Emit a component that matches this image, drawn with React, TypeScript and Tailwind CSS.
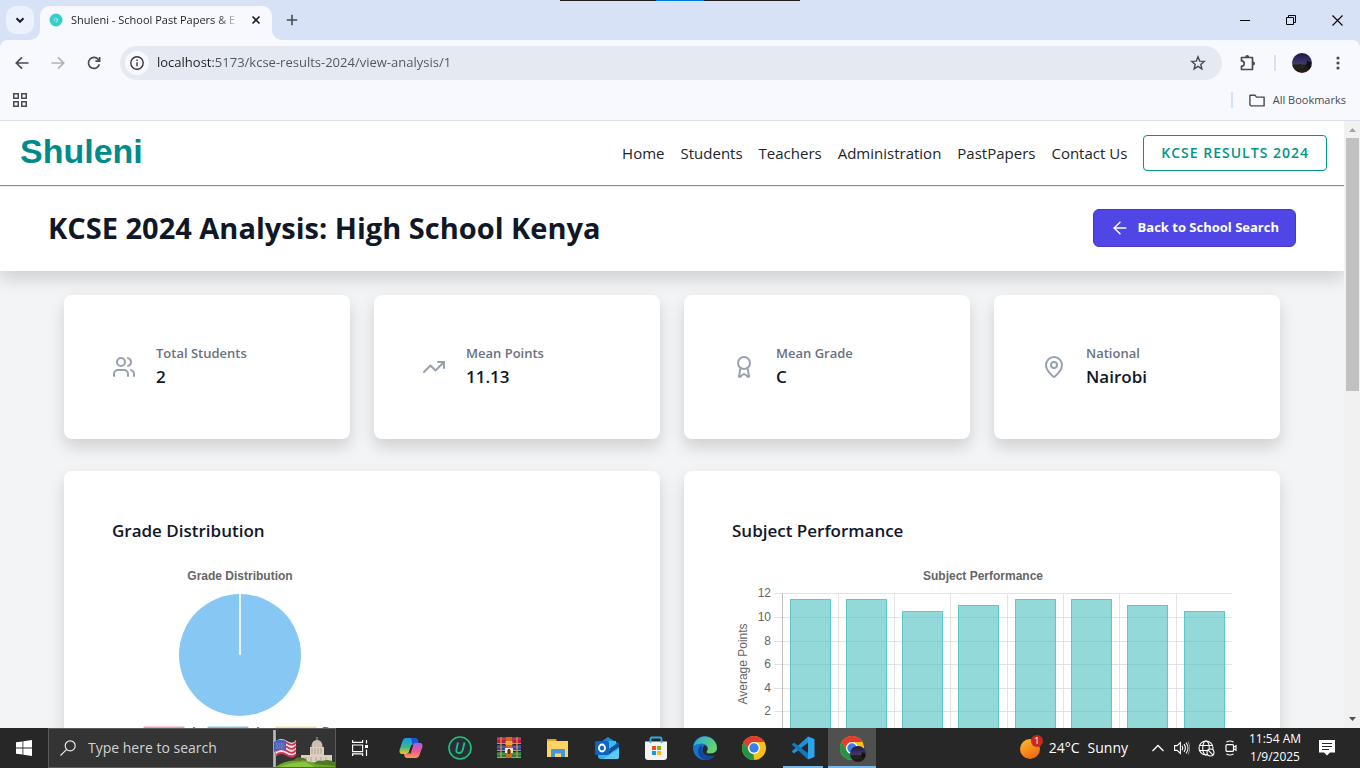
import { useState } from 'react';
import type { ReactNode } from 'react';
import { ArrowLeft, Award, MapPin, TrendingUp, Users } from 'lucide-react';

const gradeLegend = [
  { label: 'A', x: 32, fill: '#ffb1c1', stroke: '#ff6384' },
  { label: 'A-', x: 96, fill: '#9ad0f5', stroke: '#36a2eb' },
  { label: 'B+', x: 164, fill: '#ffe6aa', stroke: '#ffce56' },
];

const subjectPoints = [11.5, 11.5, 10.5, 11, 11.5, 11.5, 11, 10.5];

const navLinks = ['Home', 'Students', 'Teachers', 'Administration', 'PastPapers', 'Contact Us'];

/* ---------- Browser chrome ---------- */

const TabStrip = () => (
  <div className="relative flex h-10 items-end">
    <div className="absolute left-1/2 top-0 flex h-px w-60 -translate-x-1/2 bg-[#1f1f1f]">
      <span className="ml-24 w-12 bg-[#0078d7]" />
    </div>
    <button aria-label="Search tabs" className="mb-1.5 ml-1.5 flex size-7 items-center justify-center rounded-[10px] bg-[#ebf1fd]">
      <svg viewBox="0 0 10 10" className="size-2.5" fill="none" stroke="#1f1f1f" strokeWidth="2">
        <path d="M1.5 3.2 5 6.8 8.5 3.2" />
      </svg>
    </button>
    <div className="relative ml-1.5 flex h-[34px] w-58 items-center rounded-t-[10px] bg-[#f8f9fe] pb-1.5 pl-[9px] pr-2">
      {/* flared bottom corners of the active tab */}
      <svg viewBox="0 0 10 10" className="absolute -left-2.5 bottom-0 size-2.5" fill="#f8f9fe">
        <path d="M10 0v10H0A10 10 0 0 0 10 0z" />
      </svg>
      <svg viewBox="0 0 10 10" className="absolute -right-2.5 bottom-0 size-2.5" fill="#f8f9fe">
        <path d="M0 0v10h10A10 10 0 0 1 0 0z" />
      </svg>
      <svg viewBox="0 0 14 14" className="size-3.5 shrink-0">
        <circle cx="7" cy="7" r="6.5" fill="#34cfc9" />
        <path d="M4.5 6 7 4.6l2.6 2L8.4 9 7 9.4 5.4 8z" fill="#a4efeb" />
        <path d="M5 6.2 8.6 8M7 5.2 6.4 9" stroke="#34bdb8" strokeWidth=".7" />
      </svg>
      <span className="ml-2 whitespace-nowrap text-[11px] text-[#1f1f1f] [mask-image:linear-gradient(90deg,#000_145px,transparent_170px)]">
        Shuleni - School Past Papers &amp; E
      </span>
      <button aria-label="Close tab" className="ml-auto flex size-4 items-center justify-center">
        <svg viewBox="0 0 10 10" className="size-2.5" stroke="#1f1f1f" strokeWidth="1.6">
          <path d="m1.5 1.5 7 7M8.5 1.5l-7 7" />
        </svg>
      </button>
    </div>
    <button aria-label="New tab" className="mb-1.5 ml-1.5 flex size-7 items-center justify-center">
      <svg viewBox="0 0 12 12" className="size-3" stroke="#474b52" strokeWidth="1.6">
        <path d="M6 .8v10.4M.8 6h10.4" />
      </svg>
    </button>
    <div className="ml-auto flex h-full text-black">
      <button aria-label="Minimize" className="flex w-[46px] items-center justify-center">
        <svg viewBox="0 0 10 10" className="size-2.5" stroke="currentColor">
          <path d="M0 5.5h10" />
        </svg>
      </button>
      <button aria-label="Restore" className="flex w-[46px] items-center justify-center">
        <svg viewBox="0 0 10 10" className="size-2.5" fill="none" stroke="currentColor">
          <path d="M.5 2.5h7v7h-7zM2.5 2.5v-2h7v7h-2" />
        </svg>
      </button>
      <button aria-label="Close" className="flex w-[46px] items-center justify-center">
        <svg viewBox="0 0 11 11" className="size-[11px]" stroke="currentColor" strokeWidth="1.1">
          <path d="m.5.5 10 10M10.5.5l-10 10" />
        </svg>
      </button>
    </div>
  </div>
);

const ProfilePicture = () => (
  <svg viewBox="0 0 20 20" className="size-5">
    <defs>
      <linearGradient id="night" x1="0" y1="0" x2="0" y2="1">
        <stop offset="0" stopColor="#1c1946" />
        <stop offset=".55" stopColor="#433a6c" />
        <stop offset=".62" stopColor="#1a1a16" />
        <stop offset="1" stopColor="#2b1b12" />
      </linearGradient>
    </defs>
    <circle cx="10" cy="10" r="10" fill="url(#night)" />
    <path d="m14 12 1.500-5 1.500 2 2-1a10 10 0 0 1-2 8z" fill="#101116" />
    <path d="M1 12.500 8 11l6 2-4 3H3z" fill="#24251a" />
  </svg>
);

const Toolbar = () => {
  const [url, setUrl] = useState('localhost:5173/kcse-results-2024/view-analysis/1');

  return (
    <div className="flex items-center rounded-t-lg bg-[#f8f9fe] px-1 pb-[3px] pt-[5px] text-[#474b57]">
      <button aria-label="Back" className="flex size-9 items-center justify-center">
        <svg viewBox="0 0 14 14" className="size-3.5" fill="none" stroke="currentColor" strokeWidth="1.7">
          <path d="M13.500 7H1.500M7 1.300 1.300 7 7 12.700" />
        </svg>
      </button>
      <button aria-label="Forward" className="flex size-9 items-center justify-center text-[#b1b3b8]">
        <svg viewBox="0 0 14 14" className="size-3.5" fill="none" stroke="currentColor" strokeWidth="1.7">
          <path d="M.5 7h12M7 1.300 12.700 7 7 12.700" />
        </svg>
      </button>
      <button aria-label="Reload" className="flex size-9 items-center justify-center">
        <svg viewBox="0 0 14 14" className="size-3.5" fill="none" stroke="currentColor" strokeWidth="1.7">
          <path d="M12.300 8.200A5.500 5.500 0 1 1 11.500 3.800L12.500 5" />
          <path d="M12.600 1v4.200H8.400" />
        </svg>
      </button>
      <div className="ml-2 flex h-[34px] flex-1 items-center rounded-full bg-[#e5e9f2] pl-[5px] pr-4">
        <button aria-label="View site information" className="flex size-6 items-center justify-center rounded-full bg-[#f8f9fe]">
          <svg viewBox="0 0 14 14" className="size-3.5" fill="none" stroke="#33363b" strokeWidth="1.4">
            <circle cx="7" cy="7" r="6.200" />
            <path d="M7 6.200v4M7 3.600v1.500" />
          </svg>
        </button>
        <input
          aria-label="Address"
          value={url}
          onChange={(e) => setUrl(e.target.value)}
          className="ml-2 flex-1 bg-linear-to-r from-[#1f1f1f] from-[56px] to-[#50545c] to-[56px] bg-clip-text text-[13px] text-transparent outline-none"
        />
        <button aria-label="Bookmark this tab">
          <svg viewBox="0 0 16 16" className="size-4" fill="none" stroke="#474b52" strokeWidth="1.4">
            <path d="m8 1.800 1.700 4.300 4.600.3-3.500 3 1.100 4.500L8 11.400l-3.900 2.500 1.100-4.500-3.500-3 4.600-.3z" />
          </svg>
        </button>
      </div>
      <button aria-label="Extensions" className="ml-2 flex size-9 items-center justify-center">
        <svg viewBox="0 0 18 18" className="size-[18px]">
          <path d="M2.500 3.500h11v12h-11v-3.300a2.700 2.700 0 0 0 0-5.400z" fill="none" stroke="currentColor" strokeWidth="1.700" strokeLinejoin="round" />
          <path d="M6.200 3a2 2 0 0 1 4 0zM14 7.500a2 2 0 0 1 0 4z" fill="currentColor" />
        </svg>
      </button>
      <span className="ml-2 h-4 w-0.5 bg-[#d3e2fc]" />
      <button aria-label="Profile" className="ml-2 flex size-9 items-center justify-center">
        <ProfilePicture />
      </button>
      <button aria-label="Menu" className="flex size-9 items-center justify-center">
        <svg viewBox="0 0 4 14" className="h-3.5 w-1" fill="currentColor">
          <circle cx="2" cy="2" r="1.600" />
          <circle cx="2" cy="7" r="1.600" />
          <circle cx="2" cy="12" r="1.600" />
        </svg>
      </button>
    </div>
  );
};

const BookmarksBar = () => (
  <div className="flex h-[37px] items-center border-b border-[#dbe0ea] bg-[#f8f9fe] pb-1 pl-3 pr-3.5 text-[#474b52]">
    <button aria-label="Apps">
      <svg viewBox="0 0 14 14" className="ml-px size-3.5" fill="none" stroke="currentColor" strokeWidth="1.500">
        <path d="M.75.75h4.500v4.500H.75zM8.750.75h4.500v4.500h-4.500zM.75 8.750h4.500v4.500H.75zM8.750 8.750h4.500v4.500h-4.500z" />
      </svg>
    </button>
    <span className="ml-auto h-4 w-0.5 bg-[#d3e2fc]" />
    <button className="ml-4 flex items-center gap-2 text-[11px]">
      <svg viewBox="0 0 16 13" className="h-[13px] w-4" fill="none" stroke="currentColor" strokeWidth="1.400">
        <path d="M.9 10.800V1.300H6l1.500 1.800h7.600v8.800H1.900z" strokeLinejoin="round" />
      </svg>
      All Bookmarks
    </button>
  </div>
);

const ScrollBar = () => (
  <div className="flex w-4 shrink-0 flex-col items-center bg-[#f1f1f1]">
    <svg viewBox="0 0 17 17" className="size-[17px]">
      <path d="M5 11h7L8.500 7z" fill="#a3a3a3" />
    </svg>
    <span className="h-[253px] w-[13px] bg-[#c1c1c1]" />
    <svg viewBox="0 0 17 17" className="mt-auto size-[17px]">
      <path d="M5 6h7l-3.500 4z" fill="#505050" />
    </svg>
  </div>
);

/* ---------- Page ---------- */

const SiteHeader = () => (
  <header className="relative z-10 flex h-16 items-center justify-between bg-white pl-5 pr-[17px] shadow-[0_1px_1px_#8c8c8c]">
    <a href="#" className="pb-1 font-['Liberation_Sans',sans-serif] text-[34px] font-bold leading-10 text-[#008b8b]">
      Shuleni
    </a>
    <nav className="flex items-center gap-4 text-[15px] text-[#212529]">
      {navLinks.map((link) => (
        <a key={link} href="#">
          {link}
        </a>
      ))}
      <a href="#" className="flex h-9 items-center rounded border border-[#009688] px-[17px] text-sm font-semibold tracking-[1px] text-[#009688]">
        KCSE RESULTS 2024
      </a>
    </nav>
  </header>
);

const TitleBar = () => (
  <div className="relative flex items-center justify-between bg-white px-12 py-6 shadow-[0_8px_16px_rgba(0,0,0,0.15)]">
    <h1 className="text-[29px] font-bold leading-[38px] text-gray-900">KCSE 2024 Analysis: High School Kenya</h1>
    <button className="flex h-[38px] items-center rounded-md border border-[#4338ca] bg-[#4f46e5] px-4 text-[13px] font-bold text-white">
      <ArrowLeft className="mr-2 size-5" strokeWidth={1.75} />
      Back to School Search
    </button>
  </div>
);

interface StatCardProps {
  icon: ReactNode;
  label: string;
  value: string;
}

const StatCard = ({ icon, label, value }: StatCardProps) => (
  <div className="flex items-center rounded-lg bg-white p-12 text-gray-400 shadow-[0_8px_16px_rgba(0,0,0,0.15)]">
    {icon}
    <dl className="ml-5">
      <dt className="text-[13px] font-semibold leading-5 text-gray-500">{label}</dt>
      <dd className="text-[17px] font-semibold leading-7 text-gray-900">{value}</dd>
    </dl>
  </div>
);

const ChartCard = ({ title, children }: { title: string; children: ReactNode }) => (
  <section className="rounded-lg bg-white p-12 shadow-[0_8px_16px_rgba(0,0,0,0.15)]">
    <h2 className="mb-4 text-[17px] font-semibold leading-6 text-gray-900">{title}</h2>
    {children}
  </section>
);

const GradeChart = () => (
  <svg viewBox="0 0 256 256" className="size-64 font-['Liberation_Sans',sans-serif] text-xs" fill="#666">
    <text x="128" y="21" textAnchor="middle" fontWeight="bold">
      Grade Distribution
    </text>
    <circle cx="128" cy="96" r="61" fill="#86c7f3" />
    <path d="M128 96V35" stroke="#e9f4fd" strokeWidth="2" />
    {gradeLegend.map((item) => (
      <g key={item.label}>
        <rect x={item.x} y="168" width="40" height="12" fill={item.fill} stroke={item.stroke} strokeWidth=".6" />
        <text x={item.x + 46} y="177">
          {item.label}
        </text>
      </g>
    ))}
  </svg>
);

const SubjectChart = () => {
  const left = 50;
  const step = 56.3;
  const base = 176;
  const unit = 11.8;

  return (
    <svg viewBox="0 0 500 250" className="w-full font-['Liberation_Sans',sans-serif] text-xs" fill="#666">
      <text x="251" y="21" textAnchor="middle" fontWeight="bold">
        Subject Performance
      </text>
      <text x="0" y="0" textAnchor="middle" transform="translate(15 105) rotate(-90)">
        Average Points
      </text>
      <g shapeRendering="crispEdges">
        {[0, 2, 4, 6, 8, 10, 12].map((tick) => (
          <rect key={tick} x="42" y={Math.round(base - tick * unit)} width="458" height="1" fill="#e3e3e3" />
        ))}
        {[0, 1, 2, 3, 4, 5, 6, 7].map((i) => (
          <rect key={i} x={Math.floor(left + i * step)} y="34" width="1" height="150" fill={i === 0 ? '#bfbfbf' : '#e3e3e3'} />
        ))}
      </g>
      {[0, 2, 4, 6, 8, 10, 12].map((tick) => (
        <text key={tick} x="39" y={base - tick * unit + 4} textAnchor="end">
          {tick}
        </text>
      ))}
      {subjectPoints.map((points, i) => {
        const x = Math.floor(left + i * step + 8);
        const y = Math.round(base - points * unit);
        return (
          <g key={i}>
            <rect x={x} y={y} width="41" height={base - y} fill="rgba(75,192,192,0.6)" />
            <path d={`M${x + 0.5} ${base}V${y + 0.5}H${x + 40.5}V${base}`} fill="none" stroke="#4bc0c0" strokeOpacity=".75" />
          </g>
        );
      })}
    </svg>
  );
};

/* ---------- Taskbar ---------- */

const SearchArt = () => (
  <svg viewBox="0 0 62 38" className="h-[38px] w-[62px] shrink-0">
    <path d="M1.500 1v37" stroke="#b9bcc0" strokeWidth="2.600" />
    <path d="M3 12q5-4 11 0t9-1v14q-4 3-10 0t-10 2z" fill="#e9e4ea" />
    <path d="M3 14q5-4 11 0t9-1M3 18q5-4 11 0t9-1M3 22q5-4 11 0t9-1M3 26q5-4 11 0t9-1" stroke="#cf3450" strokeWidth="1.800" fill="none" />
    <path d="M1 13q5-4 12-1v10q-6-3-12 1z" fill="#4d62b4" />
    <path d="M3 15h8M4 17h8M3 19h8" stroke="#9fadde" strokeDasharray="1 1.500" />
    <path d="M44 8v6" stroke="#4a9a88" strokeWidth="1.600" />
    <path d="M38.500 18q0-7 5.500-7t5.500 7z" fill="#cdbfb0" />
    <path d="M37 18h14v8H37zM28 26h31v8H28z" fill="#dccfc1" />
    <path d="M39 19v6M42 19v6M45 19v6M48 19v6M33 28v4M38 28v4M43 28v4M48 28v4M53 28v4" stroke="#ab9b8a" strokeWidth=".900" />
    <path d="M2 38q14-9 30-6t30 1v5z" fill="#6fa52f" />
    <path d="M6 38q14-5 26-5l10 5z" fill="#8cc63c" />
    <path d="M21 31q3-4 7-2 4-1 6 3zM41 35q3-5 8-3 8-3 13 2v3z" fill="#4f7a1f" />
  </svg>
);

const ChromeLogo = ({ className }: { className: string }) => (
  <svg viewBox="0 0 24 24" className={className}>
    <circle cx="12" cy="12" r="12" fill="#fbc116" />
    <path d="M1.600 6A12 12 0 0 1 22.400 6H12a6 6 0 0 0-5.200 9z" fill="#e33b2e" />
    <path d="M1.600 6 6.800 15A6 6 0 0 0 12 18l2.500-.500L12 24A12 12 0 0 1 1.600 6z" fill="#229447" />
    <path d="M17.200 15 12 24l-.5-5.900z" fill="#fbc116" />
    <circle cx="12" cy="12" r="5.900" fill="#fff" />
    <circle cx="12" cy="12" r="4.700" fill="#3b7ded" />
  </svg>
);

const taskIcons: { name: string; icon: ReactNode; open?: boolean; active?: boolean }[] = [
  {
    name: 'Copilot',
    icon: (
      <svg viewBox="0 0 24 24" className="size-6">
        <defs>
          <linearGradient id="cpA" x1="0" y1="0" x2="0" y2="1">
            <stop offset="0" stopColor="#1598ef" />
            <stop offset=".55" stopColor="#37b98a" />
            <stop offset="1" stopColor="#f3c51c" />
          </linearGradient>
          <linearGradient id="cpB" x1="0" y1="0" x2="0" y2="1">
            <stop offset="0" stopColor="#a95cf0" />
            <stop offset=".55" stopColor="#f05a90" />
            <stop offset="1" stopColor="#fa9a4b" />
          </linearGradient>
        </defs>
        <path d="M7 2h9q2 0 2.600 2l.9 3h-4q-2 0-2.600 2L10 16q-1 2-3 2H3q-3 0-2.400-4L3.500 5Q4.500 2 7 2z" fill="url(#cpA)" />
        <path d="M12 2h4q2 0 2.600 2l.9 3h-4q-1.500 0-2.200 1.200z" fill="#1e55d6" />
        <path d="M17 22H8q-2 0-2.600-2l-.4-2h3q2 0 2.600-2L13.500 9q.8-2 2.600-2H21q3 0 2.400 4l-2.900 8Q19.500 22 17 22z" fill="url(#cpB)" />
        <path d="M9.800 16.200 12.300 9l2.100-.1-3 9z" fill="#272727" />
      </svg>
    ),
  },
  {
    name: 'Uninstaller',
    icon: (
      <svg viewBox="0 0 24 24" className="size-6" fill="none" stroke="#22c17b">
        <circle cx="12" cy="12" r="11" fill="#26303a" strokeWidth="1.600" />
        <path d="M10 6.500 8.500 13q-.8 4 2.500 4t4-4L16.500 6.500" strokeWidth="1.800" />
      </svg>
    ),
  },
  {
    name: 'WinRAR',
    icon: (
      <svg viewBox="0 0 24 24" className="size-6">
        <path d="M0 1h24v7H0z" fill="#b51d45" />
        <path d="M0 9h24v6H0z" fill="#3940a3" />
        <path d="M0 16h24v6H0z" fill="#247d3b" />
        <path d="M0 3h24M0 11h24M0 18h24" stroke="#ffffff" strokeOpacity=".25" />
        <path d="M0 7.500h24M0 14.500h24M0 21.500h24" stroke="#d8c9b4" strokeOpacity=".6" />
        <path d="M4 1v21M20 1v21" stroke="#d6a13a" strokeWidth="1.200" />
        <path d="M9 1h6v21H9z" fill="#d06a1c" />
        <path d="M8.500 5h7v4h-7z" fill="#f0a63c" />
        <path d="M8 12h8v5h-2v-3h-4v3H8z" fill="#eee3d3" />
        <path d="M11 13h2v5h-2z" fill="#50331b" />
      </svg>
    ),
  },
  {
    name: 'File Explorer',
    icon: (
      <svg viewBox="0 0 24 24" className="size-6">
        <path d="M1 3h9l1 2v4H1z" fill="#e5a11b" />
        <path d="M1 5h21v16H1z" fill="#fcd364" />
        <path d="M5 21v-7q0-1 1-1h12q1 0 1 1v7h-4v-3.500H9V21z" fill="#4197dd" />
      </svg>
    ),
  },
  {
    name: 'Outlook',
    icon: (
      <svg viewBox="0 0 24 24" className="size-6">
        <path d="M3 8 13 1l11 7v4H3z" fill="#1f87d8" />
        <path d="M7 5h14v10H7z" fill="#37bdf2" />
        <path d="M14 13 24 6v6l-8 6z" fill="#12509a" />
        <path d="M3 11v9q0 3 3 3h15q3 0 3-3v-9L14 18z" fill="#35b4ee" />
        <path d="M8 23 24 13v8q0 2-3 2z" fill="#5ccbf6" />
        <rect x="0" y="5" width="14" height="14" rx="1.500" fill="#0e65bd" />
        <ellipse cx="7" cy="12" rx="3" ry="3.500" fill="none" stroke="#fff" strokeWidth="1.900" />
      </svg>
    ),
  },
  {
    name: 'Microsoft Store',
    icon: (
      <svg viewBox="0 0 24 24" className="size-6">
        <path d="M6.500 6V3q0-1.500 1.500-1.500h8q1.500 0 1.500 1.500v3" fill="none" stroke="#2bb1e8" strokeWidth="1.800" />
        <path d="M1 5.500h22V21q0 3-3 3H4q-3 0-3-3z" fill="#f3f3f3" />
        <path d="M8 10h4v4H8z" fill="#ef5023" />
        <path d="M13 10h4v4h-4z" fill="#7eb900" />
        <path d="M8 15h4v4H8z" fill="#169ade" />
        <path d="M13 15h4v4h-4z" fill="#fcb813" />
        <path d="M6.500 5v2M17.500 5v2" stroke="#2bb1e8" strokeWidth="1.800" />
      </svg>
    ),
  },
  {
    name: 'Edge',
    icon: (
      <svg viewBox="0 0 24 24" className="size-6">
        <defs>
          <linearGradient id="edgeTop" x1="0" y1="0" x2="1" y2=".3">
            <stop offset="0" stopColor="#2ba5dd" />
            <stop offset="1" stopColor="#67d46a" />
          </linearGradient>
        </defs>
        <circle cx="12" cy="12" r="12" fill="#1673c5" />
        <path d="M.3 10A12 12 0 0 1 24 12q0 5-6 5.500-5 .3-4.500-2 1.500-1.500 1.500-3.500-.5-4-6-4.500Q3.500 7.500.3 10z" fill="url(#edgeTop)" />
        <path d="M9 9q-4 2-4 7 .5 6 7.500 8 6.500 0 10-5.500-5 2.500-9.500.5-4.500-2.500-4-10z" fill="#11489c" />
        <path d="M13.500 15.500q-.5 2.300 4.500 2 4-.3 6-3.500l1 3-2.300 1.800Q20.500 20 18 20q-6.500 0-8-4.500Q9 11.500 11.500 9q2.800 1 3 3.500 0 1.500-1 3z" fill="#272727" />
      </svg>
    ),
  },
  { name: 'Chrome', icon: <ChromeLogo className="size-6" /> },
  {
    name: 'Visual Studio Code',
    open: true,
    icon: (
      <svg viewBox="0 0 24 24" className="size-6">
        <path d="M17 .5v6.200L3 17.500l-2.300-2z" fill="#2091d6" />
        <path d="M17 23.500v-6.200L3 6.500l-2.300 2z" fill="#1478b8" />
        <path d="M17 .5 23.500 3v18L17 23.500z" fill="#2ba4ec" />
      </svg>
    ),
  },
  {
    name: 'Chrome profile window',
    open: true,
    active: true,
    icon: (
      <span className="relative">
        <ChromeLogo className="size-6" />
        <span className="absolute -bottom-0.5 -right-0.5 [&>svg]:size-4">
          <ProfilePicture />
        </span>
      </span>
    ),
  },
];

const Taskbar = () => (
  <footer className="flex h-10 shrink-0 items-stretch bg-[#272727] text-white">
    <button aria-label="Start" className="flex w-12 items-center justify-center">
      <svg viewBox="0 0 16 16" className="size-4" fill="#fff">
        <path d="M0 2.300 6.500 1.400v6.200H0zM7.300 1.300 16 0v7.600H7.300zM0 8.400h6.500v6.200L0 13.700zM7.300 8.400H16V16l-8.700-1.300z" />
      </svg>
    </button>
    <label className="flex w-72 items-center overflow-hidden border border-[#5c5c5c] bg-[#343434] pl-[11px]">
      <svg viewBox="0 0 16 16" className="size-4 shrink-0" fill="none" stroke="#e8e8e8" strokeWidth="1.200">
        <circle cx="10.200" cy="5.800" r="5" />
        <path d="M6.700 9.300.5 15.500" />
      </svg>
      <input
        aria-label="Search"
        placeholder="Type here to search"
        className="ml-3 w-0 flex-1 bg-transparent text-sm outline-none placeholder:text-[#d2d2d2]"
      />
      <SearchArt />
    </label>
    <button aria-label="Task view" className="flex w-12 items-center justify-center">
      <svg viewBox="0 0 16 16" className="size-4" fill="none" stroke="#fff" strokeWidth="1.200">
        <path d="M.6 0v2.400h10V0M.6 5h10v6.600H.6zM.6 16v-2.100h10V16M14.500 0v3.500M14.500 9.500V16" />
        <path d="M13 5h3v3h-3z" fill="#fff" stroke="none" />
      </svg>
    </button>
    <div className="ml-[3px] flex gap-px">
      {taskIcons.map((item) => (
        <button
          key={item.name}
          aria-label={item.name}
          className={`flex w-12 flex-col items-center ${item.active ? 'bg-[#505050]' : ''}`}
        >
          <span className="flex flex-1 items-center pt-0.5">{item.icon}</span>
          <span className={`h-0.5 ${item.active ? 'w-12' : 'w-10'} ${item.open ? 'bg-[#76b9ed]' : ''}`} />
        </button>
      ))}
    </div>
    <div className="ml-auto flex items-center">
      <button className="flex items-center gap-2 text-sm">
        <span className="relative size-[22px]">
          <svg viewBox="0 0 22 22" className="size-[22px]">
            <defs>
              <linearGradient id="sun" x1="0" y1="0" x2=".6" y2="1">
                <stop offset="0" stopColor="#fbc02f" />
                <stop offset="1" stopColor="#f2690f" />
              </linearGradient>
            </defs>
            <circle cx="11" cy="12" r="10" fill="url(#sun)" />
          </svg>
          <span className="absolute -right-0.5 -top-0.5 flex size-3 items-center justify-center rounded-full bg-[#c42b1c] text-[9px]">1</span>
        </span>
        <span>24°C</span>
        <span>Sunny</span>
      </button>
      <button aria-label="Show hidden icons" className="ml-6">
        <svg viewBox="0 0 12 12" className="size-3" fill="none" stroke="#fff" strokeWidth="1.300">
          <path d="m.5 9 5.500-5.500L11.500 9" />
        </svg>
      </button>
      <button aria-label="Volume" className="ml-2.5">
        <svg viewBox="0 0 16 16" className="size-4" fill="none" stroke="#fff" strokeWidth="1.100">
          <path d="M.6 5.600h2.500l3.300-3v10.800l-3.300-3H.6zM8 5.800q1.500 2.200 0 4.400M10 4.200q2.800 3.800 0 7.600" />
          <path d="M12 2.600q4 5.400 0 10.800" strokeOpacity=".9" />
          <path d="M14 1.500q3.500 6.500 0 13" strokeOpacity=".4" />
        </svg>
      </button>
      <button aria-label="Network" className="ml-2">
        <svg viewBox="0 0 17 17" className="size-[17px]" fill="none" stroke="#fff" strokeWidth="1.100">
          <circle cx="8" cy="8" r="7" />
          <ellipse cx="8" cy="8" rx="3.300" ry="7" />
          <path d="M1.500 5.500h13M1.500 10.500h13" />
          <circle cx="12.500" cy="12.500" r="3.500" fill="#272727" />
          <path d="m10.200 10.200 4.600 4.600" />
        </svg>
      </button>
      <button aria-label="Meet Now" className="ml-2">
        <svg viewBox="0 0 16 16" className="size-4" fill="none" stroke="#fff" strokeWidth="1.200">
          <rect x="3" y="4.600" width="7.500" height="6.800" rx="1" />
          <path d="m10.500 7.300 2.500-1.500v4.400l-2.500-1.500M3.500 2Q7 0 10.500 2M3.500 14q3.500 2 7 0" />
        </svg>
      </button>
      <div className="w-[72px] text-center text-xs leading-[18px]">
        <div>11:54 AM</div>
        <div>1/9/2025</div>
      </div>
      <button aria-label="Notifications" className="ml-2 mr-[25px]">
        <svg viewBox="0 0 16 16" className="size-4">
          <path d="M0 0h16v12.500h-5L8 15.500l-3-3H0z" fill="#fff" />
          <path d="M3 3.500h10M3 6.500h10M3 9.500h7" stroke="#272727" strokeWidth="1.100" />
        </svg>
      </button>
    </div>
  </footer>
);

export default function App() {
  return (
    <div className="flex h-screen flex-col overflow-hidden bg-[#d8e2f6] font-['Open_Sans',sans-serif]">
      <TabStrip />
      <Toolbar />
      <BookmarksBar />
      <div className="flex min-h-0 flex-1">
        <main className="min-w-0 flex-1 overflow-hidden bg-gray-100">
          <SiteHeader />
          <TitleBar />
          <div className="px-16 pt-6">
            <div className="grid grid-cols-4 gap-6">
              <StatCard icon={<Users className="size-6" />} label="Total Students" value="2" />
              <StatCard icon={<TrendingUp className="size-6" />} label="Mean Points" value="11.13" />
              <StatCard icon={<Award className="size-6" />} label="Mean Grade" value="C" />
              <StatCard icon={<MapPin className="size-6" />} label="National" value="Nairobi" />
            </div>
            <div className="mt-8 grid grid-cols-2 gap-6">
              <ChartCard title="Grade Distribution">
                <GradeChart />
              </ChartCard>
              <ChartCard title="Subject Performance">
                <SubjectChart />
              </ChartCard>
            </div>
          </div>
        </main>
        <ScrollBar />
      </div>
      <Taskbar />
    </div>
  );
}
